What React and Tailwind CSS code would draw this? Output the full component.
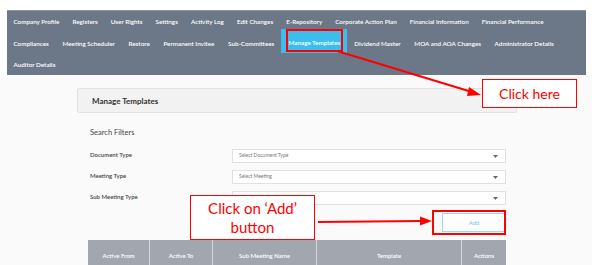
import React from 'react';

const navRows = [
  ['Company Profile', 'Registers', 'User Rights', 'Settings', 'Activity Log', 'Edit Changes', 'E-Repository', 'Corporate Action Plan', 'Financial Information', 'Financial Performance'],
  ['Compliances', 'Meeting Scheduler', 'Restore', 'Permanent Invitee', 'Sub-Committees', 'Manage Templates', 'Dividend Master', 'MOA and AOA Changes', 'Administrator Details'],
  ['Auditor Details'],
];

const filtros = [
  { label: 'Document Type', placeholder: 'Select Document Type' },
  { label: 'Meeting Type', placeholder: 'Select Meeting' },
  { label: 'Sub Meeting Type', placeholder: '' },
];

const columnas = [
  { nombre: 'Active From', ancho: 'w-[62px]' },
  { nombre: 'Active To', ancho: 'w-[63px]' },
  { nombre: 'Sub Meeting Name', ancho: 'w-[104px]' },
  { nombre: 'Template', ancho: 'w-[145px]' },
  { nombre: 'Actions', ancho: 'flex-1' },
];

const Caret = () => (
  <svg width="5" height="3" viewBox="0 0 5 3" className="mr-[7px]">
    <path d="M0 0 L5 0 L2.5 3 Z" fill="#666" />
  </svg>
);

const App = () => {
  return (
    <div className="relative w-[592px] h-[265px] overflow-hidden bg-[#fafafa] font-['Lato',sans-serif]">
      {/* Barra de navegacion */}
      <div className="pt-[10px] bg-white">
        <nav className="mx-[7px] w-[579px] h-[65px] bg-[#6c7787] border-t border-[#8a94a2]">
          {navRows.map((fila, i) => (
            <div key={i} className={`flex h-[21.5px] items-center ${i === 1 ? 'gap-[0.6px]' : ''}`}>
              {fila.map((item) => {
                const activo = item === 'Manage Templates';
                return (
                  <div
                    key={item}
                    className={
                      activo
                        ? 'self-start -mt-[4px] h-[24px] pt-[5px] flex items-center px-[7px] bg-[#3bbdee] text-white text-[6.3px] font-semibold whitespace-nowrap'
                        : 'flex items-center px-[6.5px] text-white text-[6.3px] font-semibold whitespace-nowrap'
                    }
                  >
                    {item}
                  </div>
                );
              })}
            </div>
          ))}
        </nav>
      </div>

      {/* Contenido */}
      <div className="ml-[77px] w-[440px] pt-[13px]">
        <div className="h-[25px] flex items-center px-[14px] bg-[#f2f2f2] border border-[#e2e2e2] rounded-[2px]">
          <span className="text-[8px] font-bold text-[#333]">Manage Templates</span>
        </div>

        <div className="px-[11px]">
          <div className="pl-[2px] pt-[14px] h-[36px] text-[7.5px] text-[#444]">Search Filters</div>

          <div className="flex flex-col gap-[7px]">
            {filtros.map((f) => (
              <div key={f.label} className="flex items-start h-[14px]">
                <div className="w-[144px] pl-[2px] pt-[1px] text-[6px] font-semibold text-[#444]">{f.label}</div>
                <div className="flex-1 h-[14px] flex items-center justify-between bg-white border border-[#e0e0e0]">
                  <span className="pl-[6px] text-[5px] text-[#777]">{f.placeholder}</span>
                  <Caret />
                </div>
              </div>
            ))}
          </div>

          <div className="flex justify-end pt-[8px]">
            <button className="w-[64px] h-[19px] bg-white border border-[#9bd8f2] text-[#6fc3ea] text-[6px]">
              Add
            </button>
          </div>

          <div className="mt-[8px] flex h-[30px] bg-[#a2a7af]">
            {columnas.map((c, i) => (
              <div
                key={c.nombre}
                className={`${c.ancho} flex items-center justify-center text-white text-[6px] font-semibold ${i < columnas.length - 1 ? 'border-r border-[#d4d7db]' : ''}`}
              >
                {c.nombre}
              </div>
            ))}
          </div>
        </div>
      </div>

      {/* Anotaciones */}
      <div className="absolute left-[286px] top-[29px] w-[57px] h-[23px] border-2 border-[#ff0000]" />
      <div className="absolute left-[432px] top-[210px] w-[74px] h-[25px] border-[2.5px] border-[#ff0000]" />

      <div className="absolute left-[482px] top-[79px] w-[95px] h-[29px] bg-white border border-[#ff0000] flex items-center justify-center text-[#ff0000] text-[14px]">
        Click here
      </div>

      <div className="absolute left-[190px] top-[195px] w-[125px] h-[45px] bg-white border border-[#ff0000] flex flex-col items-center justify-center text-[#ff0000] text-[15px] leading-[19px]">
        <span>Click on ‘Add’</span>
        <span>button</span>
      </div>

      <svg className="absolute left-0 top-0" width="592" height="265" viewBox="0 0 592 265">
        <line x1="337" y1="51" x2="472" y2="92" stroke="#ff0000" strokeWidth="2" />
        <path d="M481 95 L469 87 L467 96 Z" fill="#ff0000" />
        <line x1="318" y1="222" x2="422" y2="221" stroke="#ff0000" strokeWidth="2" />
        <path d="M432 221 L420 216.5 L420 225.5 Z" fill="#ff0000" />
      </svg>
    </div>
  );
};

export default App;
